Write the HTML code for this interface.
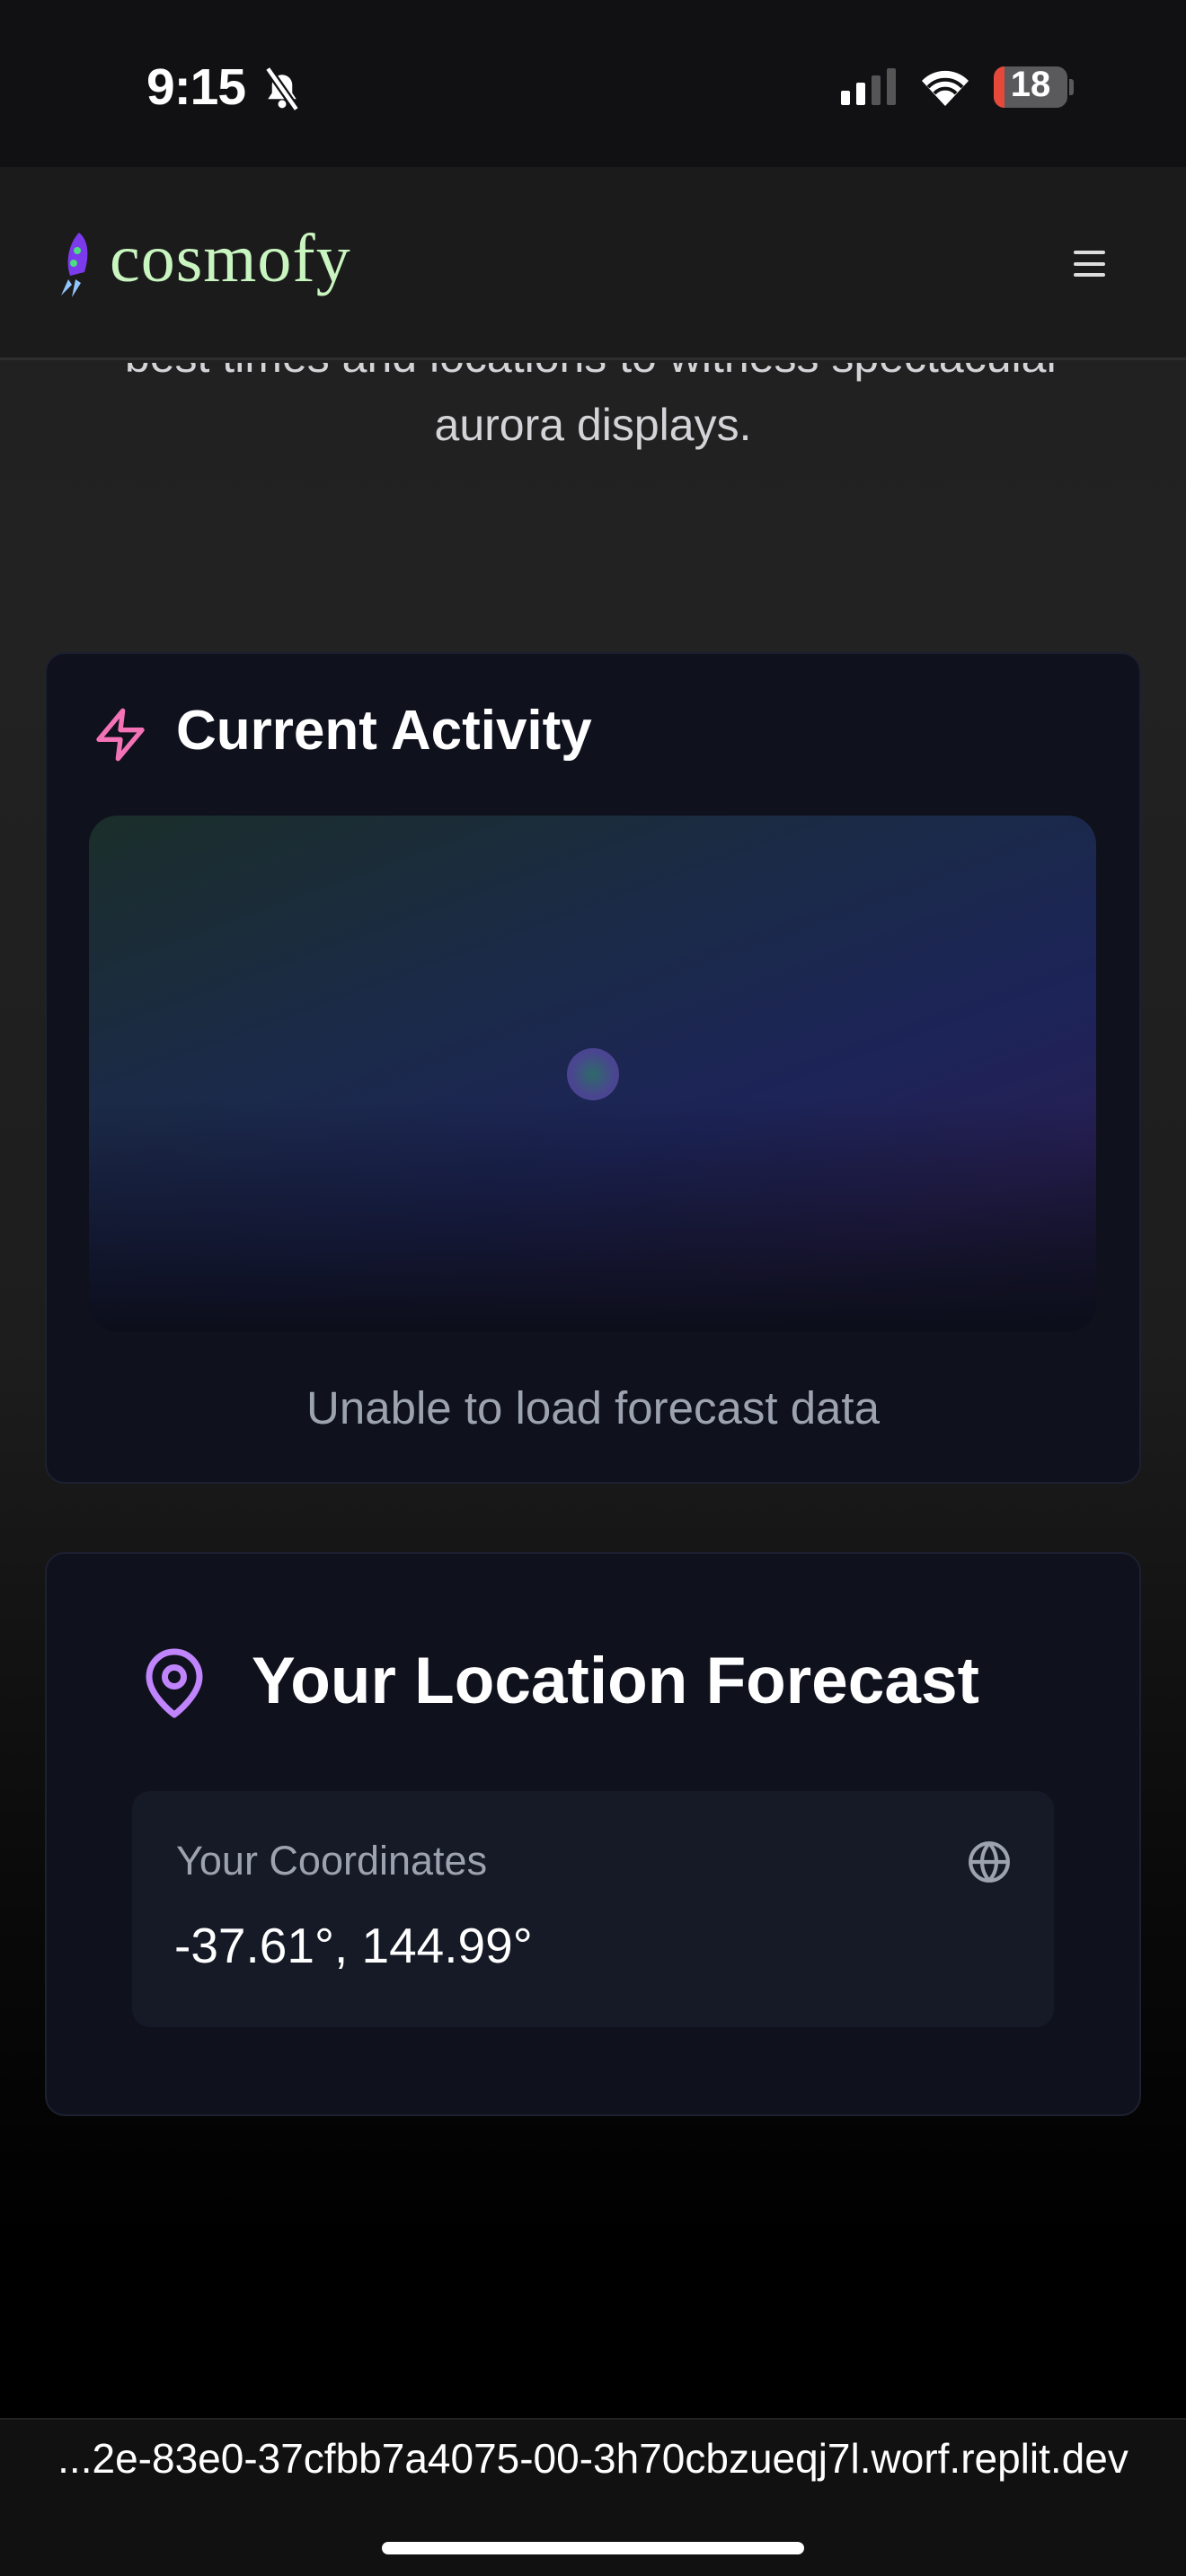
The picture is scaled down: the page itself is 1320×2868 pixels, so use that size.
<!DOCTYPE html>
<html><head><meta charset="utf-8"><style>
*{margin:0;padding:0;box-sizing:border-box}
html,body{width:1320px;height:2868px;overflow:hidden}
body{font-family:"Liberation Sans",sans-serif;background:linear-gradient(180deg,#1f1f1f 0px,#222 700px,#1d1d1d 1500px,#0a0a0a 2100px,#000 2500px);position:relative}
.abs{position:absolute}
</style></head><body>
<div class="abs" style="left:0;top:0;width:1320px;height:186px;background:#111113"></div>
<div class="abs" style="left:163px;top:64px;color:#fff;font-weight:bold;font-size:57px;letter-spacing:-1px">9:15</div>
<svg class="abs" style="left:286px;top:72px" width="56" height="54" viewBox="0 0 24 24"><path d="M5 17h14l-2-3V10a5 5 0 0 0-10 0v4z" fill="#fff"/><circle cx="12" cy="19.5" r="2" fill="#fff"/><path d="M5 2l14 20" stroke="#111113" stroke-width="4"/><path d="M5 2l14 20" stroke="#fff" stroke-width="2"/></svg>
<div class="abs" style="left:936px;top:101px;width:10px;height:16px;background:#fff;border-radius:2px"></div>
<div class="abs" style="left:953px;top:92px;width:10px;height:25px;background:#fff;border-radius:2px"></div>
<div class="abs" style="left:970px;top:84px;width:10px;height:33px;background:#555;border-radius:2px"></div>
<div class="abs" style="left:987px;top:76px;width:10px;height:41px;background:#555;border-radius:2px"></div>
<svg class="abs" style="left:1022px;top:74px" width="60" height="46" viewBox="0 0 30 23"><path d="M15 22L2 8a18 18 0 0 1 26 0z" fill="#fff"/><path d="M5.5 11.5a13 13 0 0 1 19 0M9 15a8 8 0 0 1 12 0" stroke="#111113" stroke-width="2" fill="none"/></svg>
<div class="abs" style="left:1106px;top:74px;width:82px;height:46px;background:#5a5a5c;border-radius:12px;overflow:hidden"><div style="width:12px;height:46px;background:#e5493a"></div></div>
<div class="abs" style="left:1190px;top:88px;width:5px;height:18px;background:#5a5a5c;border-radius:0 3px 3px 0"></div>
<div class="abs" style="left:1106px;top:72px;width:82px;text-align:center;color:#fff;font-weight:bold;font-size:40px">18</div>

<div class="abs" style="left:0;top:186px;width:1320px;height:215px;background:#1b1b1b;border-bottom:3px solid #2e2e2e"></div>
<svg class="abs" style="left:60px;top:255px" width="50" height="78" viewBox="0 0 25 39"><path d="M14 2c5 4 6 12 3 22l-8 2c-3-9 0-19 5-24z" fill="#7c3aed"/><circle cx="13" cy="12" r="2" fill="#4ade80"/><circle cx="11" cy="19" r="2" fill="#4ade80"/><path d="M8 28l-4 9 6-6zM12 28l-2 10 5-8z" fill="#93c5fd"/></svg>
<div class="abs" style="left:122px;top:245px;color:#c9f5c0;font-family:'Liberation Serif',serif;font-size:76px;letter-spacing:1px">cosmofy</div>
<div class="abs" style="left:1195px;top:279px;width:35px;height:4px;background:#ddd;border-radius:2px"></div>
<div class="abs" style="left:1195px;top:292px;width:35px;height:4px;background:#ddd;border-radius:2px"></div>
<div class="abs" style="left:1195px;top:304px;width:35px;height:4px;background:#ddd;border-radius:2px"></div>

<div class="abs" style="left:0;top:404px;width:1320px;height:32px;overflow:hidden"><div style="margin-top:-36px;text-align:center;color:#d4d4d8;font-size:50px">best times and locations to witness spectacular</div></div>
<div class="abs" style="left:0;top:444px;width:1320px;text-align:center;color:#d4d4d8;font-size:50px">aurora displays.</div>

<div class="abs" style="left:50px;top:726px;width:1220px;height:926px;background:#0f111d;border:2px solid #1d2030;border-radius:22px"></div>
<svg class="abs" style="left:102px;top:784px" width="64" height="68" viewBox="0 0 24 24" fill="none" stroke="#f472b6" stroke-width="2" stroke-linejoin="round" stroke-linecap="round"><path d="M13 2L3 14h9l-1 8 10-12h-9z"/></svg>
<div class="abs" style="left:196px;top:778px;color:#fff;font-weight:bold;font-size:62px">Current Activity</div>
<div class="abs" style="left:99px;top:908px;width:1121px;height:575px;border-radius:32px;background:linear-gradient(180deg,rgba(10,12,24,0) 55%,#0c0e1a 100%),linear-gradient(160deg,#1b2e2a 0%,#1b2a48 35%,#1c2458 60%,#271f55 80%,#1c1738 100%)"></div>
<div class="abs" style="left:631px;top:1167px;width:58px;height:58px;border-radius:50%;background:radial-gradient(circle,#2e6a6a 0%,#4a4590 60%,#4f4494 100%)"></div>
<div class="abs" style="left:50px;top:1538px;width:1220px;text-align:center;color:#9ca3af;font-size:51px">Unable to load forecast data</div>

<div class="abs" style="left:50px;top:1728px;width:1220px;height:628px;background:#0f111d;border:2px solid #1d2030;border-radius:22px"></div>
<svg class="abs" style="left:152px;top:1828px" width="84" height="92" viewBox="0 0 24 24" fill="none" stroke="#c084fc" stroke-width="2" stroke-linejoin="round" stroke-linecap="round"><path d="M20 10c0 6-8 12-8 12s-8-6-8-12a8 8 0 0 1 16 0z"/><circle cx="12" cy="10" r="3"/></svg>
<div class="abs" style="left:280px;top:1830px;color:#fff;font-weight:bold;font-size:73px">Your Location Forecast</div>
<div class="abs" style="left:147px;top:1994px;width:1026px;height:263px;background:#161a26;border-radius:20px"></div>
<div class="abs" style="left:196px;top:2046px;color:#9ca3af;font-size:45px">Your Coordinates</div>
<svg class="abs" style="left:1076px;top:2048px" width="50" height="50" viewBox="0 0 24 24" fill="none" stroke="#9ca3af" stroke-width="2"><circle cx="12" cy="12" r="10"/><path d="M2 12h20M12 2a15 15 0 0 1 0 20M12 2a15 15 0 0 0 0 20"/></svg>
<div class="abs" style="left:194px;top:2134px;color:#fff;font-size:55px">-37.61°, 144.99°</div>

<div class="abs" style="left:0;top:2692px;width:1320px;height:176px;background:#111;border-top:2px solid #222"></div>
<div class="abs" style="left:0;top:2710px;width:1320px;text-align:center;color:#fff;font-size:46px">...2e-83e0-37cfbb7a4075-00-3h70cbzueqj7l.worf.replit.dev</div>
<div class="abs" style="left:425px;top:2830px;width:470px;height:14px;background:#fff;border-radius:7px"></div>
</body></html>
